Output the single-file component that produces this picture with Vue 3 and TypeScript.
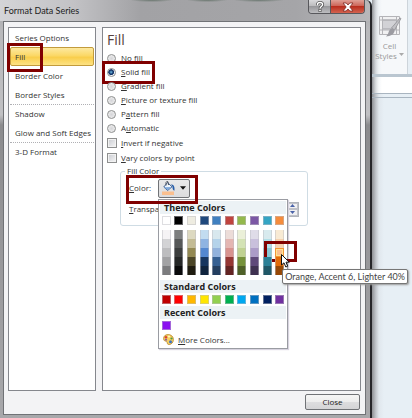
<script setup lang="ts">
import { ref } from 'vue'

interface NavItem {
  label: string
  divided?: boolean
}

interface FillOption {
  id: string
  before: string
  key: string
  after: string
}

const navItems: NavItem[] = [
  { label: 'Series Options' },
  { label: 'Fill' },
  { label: 'Border Color' },
  { label: 'Border Styles' },
  { label: 'Shadow', divided: true },
  { label: 'Glow and Soft Edges' },
  { label: '3-D Format', divided: true },
]
const activeNav = ref('Fill')

const fillOptions: FillOption[] = [
  { id: 'none', before: '', key: 'N', after: 'o fill' },
  { id: 'solid', before: '', key: 'S', after: 'olid fill' },
  { id: 'gradient', before: '', key: 'G', after: 'radient fill' },
  { id: 'picture', before: '', key: 'P', after: 'icture or texture fill' },
  { id: 'pattern', before: 'P', key: 'a', after: 'ttern fill' },
  { id: 'auto', before: 'A', key: 'u', after: 'tomatic' },
]
const fill = ref('solid')
const invert = ref(false)
const vary = ref(false)
const transparency = ref(0)

const themeColors = ['#ffffff', '#000000', '#eeece1', '#1f497d', '#4080c0', '#c0443f', '#94b94d', '#7c58a5', '#35a5c4', '#f58c3c']
const tints: string[][] = [
  ['#f5f3f5', '#7d7f7f', '#ddd9c0', '#c2dcf0', '#d8e8ee', '#ecdcd8', '#ebf0d8', '#dfdce8', '#d8eaee', '#f8ead4'],
  ['#d3d3d5', '#565858', '#c3bb94', '#8fb4e2', '#b4d3ea', '#e4b6b2', '#d4e3b5', '#c9c0dc', '#b2dfe8', '#f6d2b0'],
  ['#bdbdbf', '#3c3e3e', '#938953', '#5488d0', '#92b2dc', '#d8938f', '#c0d292', '#ac9cc8', '#88c8d6', '#fabf8f'],
  ['#a2a2a4', '#262828', '#4c4628', '#173660', '#366092', '#953734', '#76923c', '#5f497a', '#2b8096', '#e36c09'],
  ['#7c7c7e', '#0b0b0c', '#1f1c10', '#10243e', '#243f60', '#632423', '#4f6128', '#3f3151', '#205867', '#974806'],
]
const standardColors = ['#c00000', '#ff0000', '#ffb800', '#ffe600', '#92d050', '#00b050', '#00a8f0', '#0070c0', '#002060', '#7030a0']
const recentColors = ['#8a10f0']
</script>

<template>
  <div class="screen">
    <section class="dialog" role="dialog" aria-labelledby="dialog-title">
      <header class="titlebar">
        <h1 id="dialog-title">Format Data Series</h1>
        <div class="window-buttons">
          <button class="help" type="button" aria-label="Help">
            <svg viewBox="0 0 10 12" width="10" height="12" aria-hidden="true">
              <path d="M2.5 4.2V3.4C2.5 2 3.6 1.5 5 1.5s2.6.7 2.6 2.1C7.6 5.6 5 5.4 5 7.6" fill="none" stroke="#555" stroke-width="3" />
              <path d="M3.5 8h3v3h-3z" fill="#555" />
              <path d="M2.5 4.2V3.4C2.5 2 3.6 1.5 5 1.5s2.6.7 2.6 2.1C7.6 5.6 5 5.4 5 7.6" fill="none" stroke="#fff" stroke-width="1.4" />
              <path d="M4.2 8.7h1.6v1.6H4.2z" fill="#fff" />
            </svg>
          </button>
          <button class="shut" type="button" aria-label="Close window">
            <svg viewBox="0 0 12 10" width="12" height="10" aria-hidden="true">
              <path d="M1 1h3.2L6 3l1.8-2H11L7.8 5 11 9H7.8L6 7 4.2 9H1l3.2-4z" fill="#fff" stroke="#7b2a24" stroke-width=".8" />
            </svg>
          </button>
        </div>
      </header>

      <div class="client">
        <div class="panes">
          <nav class="nav" aria-label="Format categories">
            <div v-for="item in navItems" :key="item.label" class="nav-row" :class="{ divided: item.divided }">
              <button type="button" :class="{ active: item.label === activeNav }" @click="activeNav = item.label">
                {{ item.label }}
              </button>
              <span v-if="item.label === 'Fill'" class="mark mark-nav"></span>
            </div>
          </nav>

          <main class="pane">
            <h2>Fill</h2>
            <div v-for="o in fillOptions" :key="o.id" class="option">
              <input :id="'fill-' + o.id" v-model="fill" type="radio" name="fill" :value="o.id" />
              <label :for="'fill-' + o.id">{{ o.before }}<u>{{ o.key }}</u>{{ o.after }}</label>
              <span v-if="o.id === 'solid'" class="mark mark-solid"></span>
            </div>
            <div class="option check">
              <input id="invert" v-model="invert" type="checkbox" />
              <label for="invert"><u>I</u>nvert if negative</label>
            </div>
            <div class="option check">
              <input id="vary" v-model="vary" type="checkbox" />
              <label for="vary"><u>V</u>ary colors by point</label>
            </div>

            <fieldset class="group">
              <legend>Fill Color</legend>
              <div class="color-row">
                <label for="color-button"><u>C</u>olor:</label>
                <button id="color-button" class="color-button" type="button" aria-haspopup="true" aria-expanded="true">
                  <svg viewBox="0 0 13 14" width="13" height="14" aria-hidden="true">
                    <path d="M0 10.5h12V14H0z" fill="#fabf8f" />
                    <path d="M5.5 1.500 10 5.800 5.600 9.500 1.800 6z" fill="#eef5fc" stroke="#3f5f92" />
                    <path d="M2 6.200 9.600 6 5.600 9.300z" fill="#7fa9dc" />
                    <path d="M4 4.500V1.500Q4.500 0 6 .8L6.500 4" fill="none" stroke="#50545c" />
                    <path d="M9 3.300q4.200.4 3.400 6.400-2-.3-1.900-4z" fill="#245ba8" />
                  </svg>
                  <svg viewBox="0 0 7 4" width="6" height="4" aria-hidden="true"><path d="M0 0h7L3.500 4z" fill="#111" /></svg>
                </button>
                <span class="mark mark-color"></span>

                <div class="palette" role="menu">
                  <h3>Theme Colors</h3>
                  <div class="swatches top">
                    <button v-for="c in themeColors" :key="c" type="button" class="swatch" :style="{ background: c }" :aria-label="c"></button>
                  </div>
                  <div class="swatches tints">
                    <template v-for="(row, r) in tints" :key="r">
                      <div v-for="(c, i) in row" :key="c" class="cell">
                        <button type="button" class="swatch" :class="{ picked: r === 2 && i === 9 }" :style="{ background: c }" :aria-label="c"></button>
                        <template v-if="r === 2 && i === 9">
                          <span class="mark mark-swatch"></span>
                          <svg class="pointer" viewBox="0 0 9 14" width="9" height="14" aria-hidden="true">
                            <path d="M.5.5v10.500L3 8.800l1.800 4.200 1.900-.8L5 8.200h3.300z" fill="#fff" stroke="#111" />
                          </svg>
                          <span class="tip" role="tooltip">Orange, Accent 6, Lighter 40%</span>
                        </template>
                      </div>
                    </template>
                  </div>
                  <h3>Standard Colors</h3>
                  <div class="swatches">
                    <button v-for="c in standardColors" :key="c" type="button" class="swatch" :style="{ background: c }" :aria-label="c"></button>
                  </div>
                  <h3>Recent Colors</h3>
                  <div class="swatches">
                    <button v-for="c in recentColors" :key="c" type="button" class="swatch" :style="{ background: c }" :aria-label="c"></button>
                  </div>
                  <button class="more" type="button">
                    <svg viewBox="0 0 11 11" width="11" height="11" aria-hidden="true">
                      <path d="M5 .6c3.200 0 5.400 2 5.400 4.900S8.500 10.500 6 10.500 4.800 8.300 3.600 7.600.6 7.200.6 4.600 2.400.6 5 .6z" fill="#f5cf62" stroke="#b98528" stroke-width=".8" />
                      <circle cx="3" cy="3.3" r="1.2" fill="#d84132" />
                      <circle cx="6" cy="2.5" r="1.1" fill="#fff5bf" />
                      <circle cx="8.5" cy="4.5" r="1.1" fill="#4a9b45" />
                      <circle cx="3" cy="5.8" r="1" fill="#8551a8" />
                      <circle cx="7.5" cy="7.8" r="1.5" fill="#3b74c4" />
                    </svg>
                    <span><u>M</u>ore Colors...</span>
                  </button>
                </div>
              </div>
              <div class="transparency-row">
                <label for="transparency"><u>T</u>ransparency:</label>
                <div class="spinner">
                  <input id="transparency" v-model.number="transparency" type="text" />
                  <div class="steps">
                    <button type="button" aria-label="Increase" @click="transparency++">
                      <svg viewBox="0 0 5 3" width="5" height="3" aria-hidden="true"><path d="M0 3h5L2.500 0z" fill="#4a63a8" /></svg>
                    </button>
                    <button type="button" aria-label="Decrease" @click="transparency--">
                      <svg viewBox="0 0 5 3" width="5" height="3" aria-hidden="true"><path d="M0 0h5L2.500 3z" fill="#4a63a8" /></svg>
                    </button>
                  </div>
                </div>
              </div>
            </fieldset>
          </main>
        </div>
        <footer class="footer">
          <button type="button" class="close">Close</button>
        </footer>
      </div>
    </section>

    <aside class="ribbon">
      <div class="ribbon-group">
        <button type="button" class="cell-styles">
          <svg viewBox="0 0 24 23" width="24" height="23" aria-hidden="true">
            <path d="M1.5 1.500h20v18h-20z" fill="#f1f1f2" stroke="#b4b4b8" />
            <path d="M4.5 5h14v9h-14z" fill="#d2d2d6" stroke="#a2a2a8" />
            <path d="M1.5 5h20M1.500 15h20M4.500 1.500v18M18.500 1.500v18" stroke="#b4b4b8" fill="none" />
            <path d="M23 3.500 16.500 15 13.500 13 22 3z" fill="#c2c2c6" stroke="#909096" stroke-width=".8" />
            <path d="M14 13.500q3 .5 2.500 3-1.500 4.500-8.500 5 2.500-2.500 3-5.500.8-2.500 3-2.500z" fill="#9c9ca2" />
          </svg>
          <span>Cell</span>
          <span class="styles-line">Styles
            <svg viewBox="0 0 5 3" width="5" height="3" aria-hidden="true"><path d="M0 0h5L2.500 3z" fill="#aaa" /></svg>
          </span>
        </button>
      </div>
      <div class="formula-bar"></div>
      <div class="sheet-head"></div>
    </aside>
  </div>
</template>

<style>
body {
  margin: 0;
}
</style>

<style scoped>
* {
  box-sizing: border-box;
}

.screen {
  display: flex;
  min-height: 100vh;
  overflow: hidden;
  background: #e7eff5;
  color: #333;
  font: 8px/12px 'Open Sans', 'Noto Sans', sans-serif;
}

button {
  margin: 0;
  padding: 0;
  border: 0;
  background: none;
  color: inherit;
  font: inherit;
}

svg {
  display: block;
  flex: none;
}

.mark {
  position: absolute;
  border: 3px solid #800000;
  pointer-events: none;
}

.dialog {
  display: flex;
  flex: 1;
  flex-direction: column;
  padding: 0 4px 3px 3px;
  border-right: 2px solid #26262a;
  border-top-right-radius: 6px;
  background: linear-gradient(#a3a3a6, #b8b8bb 30px, #c0c0c3 115px, #8b8b8e 125px, #a8a8ab);
}

.titlebar {
  display: flex;
  align-items: flex-start;
  justify-content: space-between;
  height: 21px;
  margin: 0 -4px 0 -3px;
  padding-right: 5px;
  background:
    radial-gradient(ellipse at 41% 0, #68756d 0, transparent 7%),
    radial-gradient(ellipse at 56% 0, #68756d 0, transparent 7%),
    radial-gradient(ellipse at 70% 0, #68756d 0, transparent 7%),
    linear-gradient(90deg, #d4d4d7, #c2c2c5 20%, #a2a2a5 38%, #a5a5a8 80%, #b8b8bb);
  border-top-right-radius: 6px;
}

h1 {
  margin: 0;
  padding: 4px;
  color: #222;
  font: 9px/13px Lato, sans-serif;
}

.window-buttons {
  display: flex;
  height: 14px;
  border: 1px solid #58585c;
  border-top: 0;
  border-radius: 0 0 4px 4px;
  overflow: hidden;
}

.window-buttons button {
  display: flex;
  align-items: center;
  justify-content: center;
}

.help {
  width: 21px;
  background: linear-gradient(#d9d9db, #bcbcbe 45%, #98989b 50%, #bdbdc0);
}

.shut {
  width: 34px;
  border-left: 1px solid #58585c;
  background: linear-gradient(#dfa096, #cd6558 45%, #b92e1e 50%, #d36350);
}

.client {
  display: flex;
  flex: 1;
  flex-direction: column;
  padding: 5px 4px 4px;
  border: 1px solid #707276;
  background: #f3f3f5;
}

.panes {
  display: grid;
  flex: 1;
  grid-template-columns: 88px 1fr;
  gap: 6px;
}

.nav,
.pane {
  border: 1px solid #85878d;
  background: #fff;
}

.nav {
  padding: 0 1px;
}

.nav-row {
  position: relative;
  height: 19px;
}

.nav-row.divided {
  border-top: 1px dotted #b0b0b4;
}

.nav-row button {
  width: 100%;
  height: 100%;
  padding-left: 4px;
  border: 1px solid transparent;
  border-radius: 2px;
  text-align: left;
  white-space: nowrap;
}

.nav-row button.active {
  border-color: #c29b3c;
  background: linear-gradient(#fde9a0, #fbd866 45%, #f9ce4c 55%, #fde283);
}

.mark-nav {
  top: -4px;
  left: -3px;
  width: 36px;
  height: 29px;
}

.pane {
  padding: 3px 4px 0;
}

h2 {
  margin: 0 0 2px;
  color: #56403c;
  font-size: 14px;
  font-weight: 400;
  line-height: 18px;
}

.option {
  position: relative;
  display: flex;
  align-items: center;
  gap: 5px;
  height: 14px;
}

.option.check {
  height: 15px;
}

.option input {
  width: 9px;
  height: 9px;
  margin: 0;
  border: 1px solid #8e8f8f;
  appearance: none;
  background: radial-gradient(#d5d5d8, #f4f4f4);
}

.option input[type='radio'] {
  border-radius: 50%;
}

.option input[type='radio']:checked {
  background: radial-gradient(circle at 45% 45%, #72c4ee 0, #16386c 35%, #16386c 48%, #f0f4f8 58%);
}

.option.check input {
  width: 10px;
  height: 10px;
  background: linear-gradient(135deg, #c8cad0, #f6f6f6);
  box-shadow: inset 0 0 0 1px #f2f2f2;
}

.option.check {
  gap: 4px;
}

.mark-solid {
  top: -4px;
  left: -5px;
  width: 53px;
  height: 23px;
}

.group {
  min-width: 0;
  margin: 0 48px 0 13px;
  padding: 0 8px 6px;
  border: 1px solid #cfdce4;
  border-radius: 3px;
}

legend {
  margin-left: -4px;
  padding: 0 2px;
}

.color-row {
  position: relative;
  display: flex;
  align-items: center;
  gap: 7px;
  height: 22px;
}

.color-button {
  display: flex;
  align-items: center;
  gap: 5px;
  height: 19px;
  padding: 0 3px;
  border: 1px solid #707276;
  border-radius: 2px;
  background: linear-gradient(#e9e9ea, #dcdcde);
}

.mark-color {
  top: -2px;
  left: -3px;
  width: 72px;
  height: 29px;
  z-index: 3;
}

.transparency-row {
  display: flex;
  align-items: center;
  justify-content: space-between;
  height: 20px;
}

.spinner {
  display: flex;
  width: 48px;
  height: 15px;
  border: 1px solid #b0b4ba;
}

.spinner input {
  flex: 1;
  min-width: 0;
  padding: 0 2px;
  border: 0;
  color: inherit;
  font: inherit;
}

.steps {
  display: grid;
  width: 11px;
}

.steps button {
  display: flex;
  align-items: center;
  justify-content: center;
  border: 1px solid #c0c2c8;
  background: #f0f0f2;
}

.palette {
  position: absolute;
  z-index: 2;
  top: 22px;
  left: 29px;
  width: 130px;
  padding: 1px;
  border: 1px solid #9a9ca2;
  background: #fff;
  box-shadow: 1px 1px 1px #d8d4e0;
}

h3 {
  margin: 0;
  padding-left: 4px;
  background: #ecf2f5;
  color: #222;
  font-size: 9px;
  font-weight: 700;
  line-height: 13px;
}

.swatches {
  display: grid;
  grid-template-columns: repeat(10, 1fr);
  justify-items: center;
  padding: 2px 0;
}

.swatches.top {
  padding-bottom: 5px;
}

.swatches.tints {
  padding: 0 0 5px;
}

.cell {
  position: relative;
  display: flex;
}

.swatch {
  width: 9px;
  height: 9px;
  border: 1px solid rgba(190, 190, 196, 0.5);
}

.cell .swatch {
  border-width: 0 1px;
}

.cell .swatch.picked {
  border: 1px solid #f29436;
  box-shadow: inset 0 0 0 1px #ffe294;
}

.mark-swatch {
  top: -7px;
  left: -11px;
  width: 33px;
  height: 21px;
}

.pointer {
  position: absolute;
  z-index: 2;
  top: 6px;
  left: 6px;
}

.tip {
  position: absolute;
  z-index: 1;
  top: 21px;
  left: 7px;
  padding: 0 2px;
  border: 1px solid #767676;
  border-radius: 2px;
  background: #fff;
  box-shadow: 1px 1px 2px #999;
  color: #444;
  font: 9px/13px Lato, sans-serif;
  white-space: nowrap;
}

.more {
  display: flex;
  align-items: center;
  gap: 4px;
  height: 15px;
  padding-left: 3px;
}

.footer {
  display: flex;
  justify-content: flex-end;
  padding: 3px 1px 0;
}

.close {
  width: 55px;
  height: 16px;
  border: 1px solid #707276;
  border-radius: 2px;
  background: linear-gradient(#f5f5f5, #ededed 48%, #dddddf 52%, #d4d4d6);
  color: #222;
}

.ribbon {
  width: 40px;
  background: linear-gradient(90deg, #8f9195, #c3c7cd 4px, rgba(220, 226, 232, 0.6) 7px, transparent 12px);
  color: #999;
}

.ribbon-group {
  height: 74px;
  margin-right: 4px;
  padding-top: 15px;
  border-right: 1px solid #cdd4da;
  background: linear-gradient(90deg, transparent, #f6f8fa 10px);
}

.cell-styles {
  display: flex;
  flex-direction: column;
  align-items: center;
  width: 100%;
  line-height: 10px;
}

.cell-styles svg:first-child {
  margin-bottom: 3px;
}

.styles-line {
  display: flex;
  align-items: center;
  gap: 2px;
}

.formula-bar {
  height: 20px;
  border-top: 3px solid #bac6d0;
  border-bottom: 1px solid #a9b5c0;
  background: linear-gradient(90deg, transparent, #fff 10px);
}

.sheet-head {
  height: 4px;
  border-bottom: 1px solid #a9b5c0;
}
</style>
